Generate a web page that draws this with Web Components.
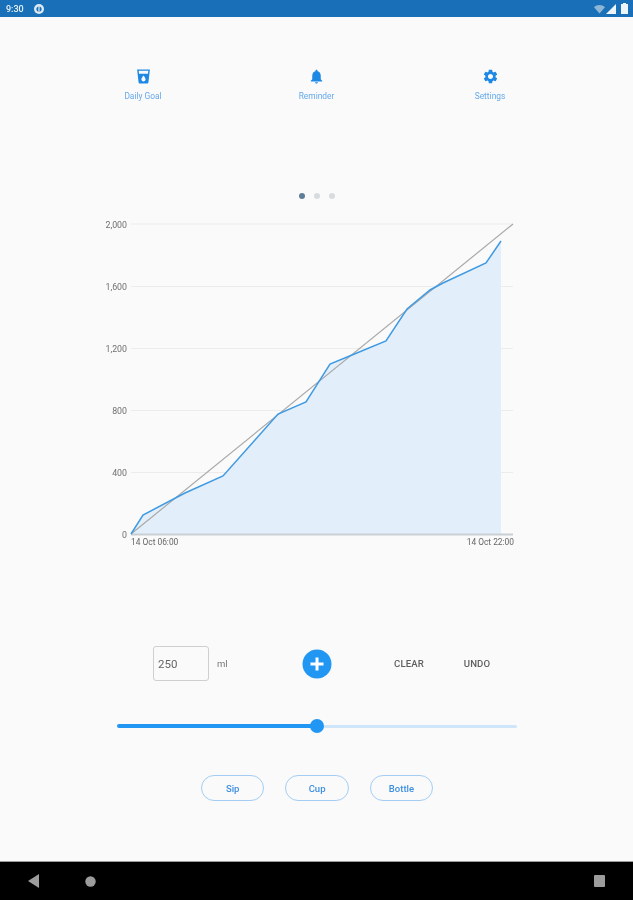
<!DOCTYPE html>
<html lang="en"><head><meta charset="utf-8"><title>Water intake</title>
<style>html,body{margin:0;padding:0;background:#fafafa}body{font-family:Roboto,"Liberation Sans",sans-serif}</style>
</head><body>
<app-shell>
  <status-bar slot="top" time="9:30"></status-bar>
  <tab-row>
    <tab-item label="Daily Goal" d="M3 2l2.01 18.23C5.13 21.23 5.97 22 7 22h10c1.03 0 1.87-.77 1.99-1.77L21 2H3zm9 17c-1.66 0-3-1.34-3-3 0-2 3-5.4 3-5.4s3 3.4 3 5.4c0 1.66-1.34 3-3 3zm6.33-11H5.67l-.44-4h13.53l-.43 4z"></tab-item>
    <tab-item label="Reminder" d="M12 22c1.1 0 2-.9 2-2h-4c0 1.1.89 2 2 2zm6-6v-5c0-3.07-1.64-5.64-4.5-6.32V4c0-.83-.67-1.5-1.5-1.5s-1.5.67-1.5 1.5v.68C7.63 5.36 6 7.92 6 11v5l-2 2v1h16v-1l-2-2z"></tab-item>
    <tab-item label="Settings" d="M19.14 12.94c.04-.3.06-.61.06-.94 0-.32-.02-.64-.07-.94l2.03-1.58c.18-.14.23-.41.12-.61l-1.92-3.32c-.12-.22-.37-.29-.59-.22l-2.39.96c-.5-.38-1.03-.7-1.62-.94l-.36-2.54c-.04-.24-.24-.41-.48-.41h-3.84c-.24 0-.43.17-.47.41l-.36 2.54c-.59.24-1.13.57-1.62.94l-2.39-.96c-.22-.08-.47 0-.59.22L2.74 8.87c-.12.21-.08.47.12.61l2.03 1.58c-.05.3-.09.63-.09.94s.02.64.07.94l-2.03 1.58c-.18.14-.23.41-.12.61l1.92 3.32c.12.22.37.29.59.22l2.39-.96c.5.38 1.03.7 1.62.94l.36 2.54c.05.24.24.41.48.41h3.84c.24 0 .44-.17.47-.41l.36-2.54c.59-.24 1.13-.56 1.62-.94l2.39.96c.22.08.47 0 .59-.22l1.92-3.32c.12-.22.07-.47-.12-.61l-2.01-1.58zM12 15.6c-1.98 0-3.6-1.62-3.6-3.6s1.62-3.6 3.6-3.6 3.6 1.62 3.6 3.6-1.62 3.6-3.6 3.6z"></tab-item>
  </tab-row>
  <page-dots></page-dots>
  <intake-chart></intake-chart>
  <intake-controls></intake-controls>
  <volume-slider></volume-slider>
  <chip-row>
    <chip-button>Sip</chip-button>
    <chip-button>Cup</chip-button>
    <chip-button>Bottle</chip-button>
  </chip-row>
  <system-nav slot="bottom"></system-nav>
</app-shell>
<script>
function def(name, html){
  customElements.define(name, class extends HTMLElement{
    constructor(){super();this.attachShadow({mode:'open'});}
    connectedCallback(){
      this.shadowRoot.innerHTML = typeof html==='function'?html(this):html;
    }
  });
}
def('app-shell',`<style>:host{display:flex;flex-direction:column;width:633px;height:900px;background:#fafafa;overflow:hidden;filter:blur(.45px)}
main{flex:1;display:flex;flex-direction:column;min-height:0}</style>
<slot name="top"></slot><main><slot></slot></main><slot name="bottom"></slot>`);
def('status-bar',el=>`<style>:host{display:flex;align-items:center;height:17px;background:#1a70b8;color:#e8f1f8;font:500 9px Roboto,sans-serif;padding:0 5px 0 6px;box-sizing:border-box}
.t{width:27px}svg{display:block}.sp{flex:1}.r{display:flex;align-items:center;gap:1px}</style>
<span class="t">${el.getAttribute('time')}</span>
<svg width="12" height="12" viewBox="0 0 12 12"><circle cx="6" cy="6" r="5" fill="#dce9f3"/><circle cx="6" cy="6" r="2.6" fill="#1a70b8"/><path d="M6 3v5.5" stroke="#dce9f3" stroke-width="1.2"/></svg>
<span class="sp"></span>
<span class="r">
<svg width="11" height="10" viewBox="0 0 11 10"><path d="M0 3.2C3 .2 8 .2 11 3.2L5.5 9.5z" fill="#8db6d6"/></svg>
<svg width="11" height="10" viewBox="0 0 11 10"><path d="M0 10L10 0v10z" fill="#eef5fa"/></svg>
<svg style="margin-left:3px" width="7" height="11" viewBox="0 0 7 11"><path d="M2 0h3v1h2v10H0V1h2z" fill="#eef5fa"/></svg>
</span>`);
def('tab-row',`<style>:host{display:flex;justify-content:space-between;padding:51px 103px 0;height:33px}</style><slot></slot>`);
def('tab-item',el=>`<style>:host{display:flex;flex-direction:column;align-items:center;width:80px}
svg{display:block;width:17px;height:17px;fill:#1e88e5}span{margin-top:6px;font:400 8.4px/10px Roboto,sans-serif;color:#64a9ec}</style>
<svg viewBox="0 0 24 24"><path d="${el.getAttribute('d')}"/></svg><span>${el.getAttribute('label')}</span>`);
def('page-dots',`<style>:host{display:flex;justify-content:center;gap:9px;margin-top:92px;height:6px}
i{width:6px;height:6px;border-radius:50%;background:#d8dcdf}i:first-of-type{background:#5d7d99}</style><i></i><i></i><i></i>`);
const pts=[[131,534],[143,515],[185,493],[223,476],[278,414],[306,402],[330,364],[352,355],[386,341],[407,309],[430,290],[443,283],[486,263],[501,241]];
const line=pts.map(p=>p.join(',')).join(' ');
const grid=[[224,'2,000'],[286.5,'1,600'],[348.5,'1,200'],[410.5,'800'],[472.5,'400']];
def('intake-chart',`<style>:host{display:block;height:339px;margin-top:15px}svg{display:block}text{font:400 8.4px Roboto,sans-serif;fill:#666}.y{font-size:8.8px;fill:#707070}</style>
<svg width="633" height="339" viewBox="0 214 633 339">
${grid.map(g=>`<line x1="131" x2="513" y1="${g[0]}" y2="${g[0]}" stroke="#ececec" stroke-width="1"/><text class="y" x="127" y="${g[0]+3.6}" text-anchor="end">${g[1]}</text>`).join('')}
<polygon points="${line} 501,534 131,534" fill="#e2effa"/>
<line x1="131" x2="513" y1="534.5" y2="534.5" stroke="#c9cfd3" stroke-width="2"/>
<text class="y" x="127" y="538" text-anchor="end">0</text>
<line x1="131" y1="534" x2="513" y2="224" stroke="#a9a9a9" stroke-width="1.2"/>
<polyline points="${line}" fill="none" stroke="#3f9ae3" stroke-width="1.5"/>
<text x="131" y="544.6">14 Oct 06:00</text><text x="514" y="544.6" text-anchor="end">14 Oct 22:00</text>
</svg>`);
def('intake-controls',`<style>:host{display:grid;grid-template-columns:56px 93px 30px auto;align-items:center;margin-top:93px;margin-left:153px;height:35px}
.in{box-sizing:border-box;height:35px;border:1px solid #cfcfcf;border-radius:3px;padding:0 4px;display:flex;align-items:center;font:400 11.5px Roboto,sans-serif;color:#666}
.ml{padding-left:8px;font:400 9.5px Roboto,sans-serif;color:#777}
svg{display:block}
.bs{display:flex;gap:8px;padding-left:47px}
.b{width:60px;font:500 9.6px Roboto,sans-serif;letter-spacing:.15px;color:#5f5f5f;text-align:center}</style>
<div class="in">250</div><div class="ml">ml</div>
<svg width="30" height="30" viewBox="0 0 30 30"><circle cx="15" cy="15" r="14.5" fill="#2196f3"/><path d="M15 8.5v13M8.5 15h13" stroke="#fff" stroke-width="3"/></svg>
<div class="bs"><div class="b">CLEAR</div><div class="b">UNDO</div></div>`);
def('volume-slider',`<style>:host{display:block;position:relative;margin:38px 116px 0 117px;height:14px}
.a,.b{display:block}.tr{display:flex;align-items:center;height:14px}
.a{width:200px;height:4px;background:#2196f3;border-radius:2px 0 0 2px}.b{flex:1;height:3px;background:#cfe5f9;border-radius:0 2px 2px 0}
.th{position:absolute;left:193px;top:0;width:14px;height:14px;border-radius:50%;background:#2196f3}</style>
<div class="tr"><span class="a"></span><span class="b"></span></div><span class="th"></span>`);
def('chip-row',`<style>:host{display:flex;justify-content:flex-start;gap:21px;margin-top:42px;padding-left:201px}</style><slot></slot>`);
def('chip-button',`<style>:host{display:flex;box-sizing:border-box;width:63.4px;height:26px;align-items:center;justify-content:center;border:1px solid #a3cdf5;border-radius:13px;font:500 9.5px Roboto,sans-serif;color:#3d8fe0}</style><slot></slot>`);
def('system-nav',`<style>:host{display:flex;align-items:center;box-sizing:border-box;height:39px;margin-top:auto;background:#000;border-top:1px solid #9a9a9a;padding-left:28px;padding-right:28px}
svg{display:block}.c{margin-left:45px}.s{margin-left:auto}</style>
<svg width="12" height="14" viewBox="0 0 12 14"><path d="M11 0v14L0 7z" fill="#9c9c9c"/></svg>
<svg class="c" width="11" height="11" viewBox="0 0 11 11"><circle cx="5.5" cy="5.5" r="5.2" fill="#9c9c9c"/></svg>
<svg class="s" width="11" height="12" viewBox="0 0 11 12"><rect width="11" height="12" rx="1" fill="#9c9c9c"/></svg>`);
</script>
</body></html>
